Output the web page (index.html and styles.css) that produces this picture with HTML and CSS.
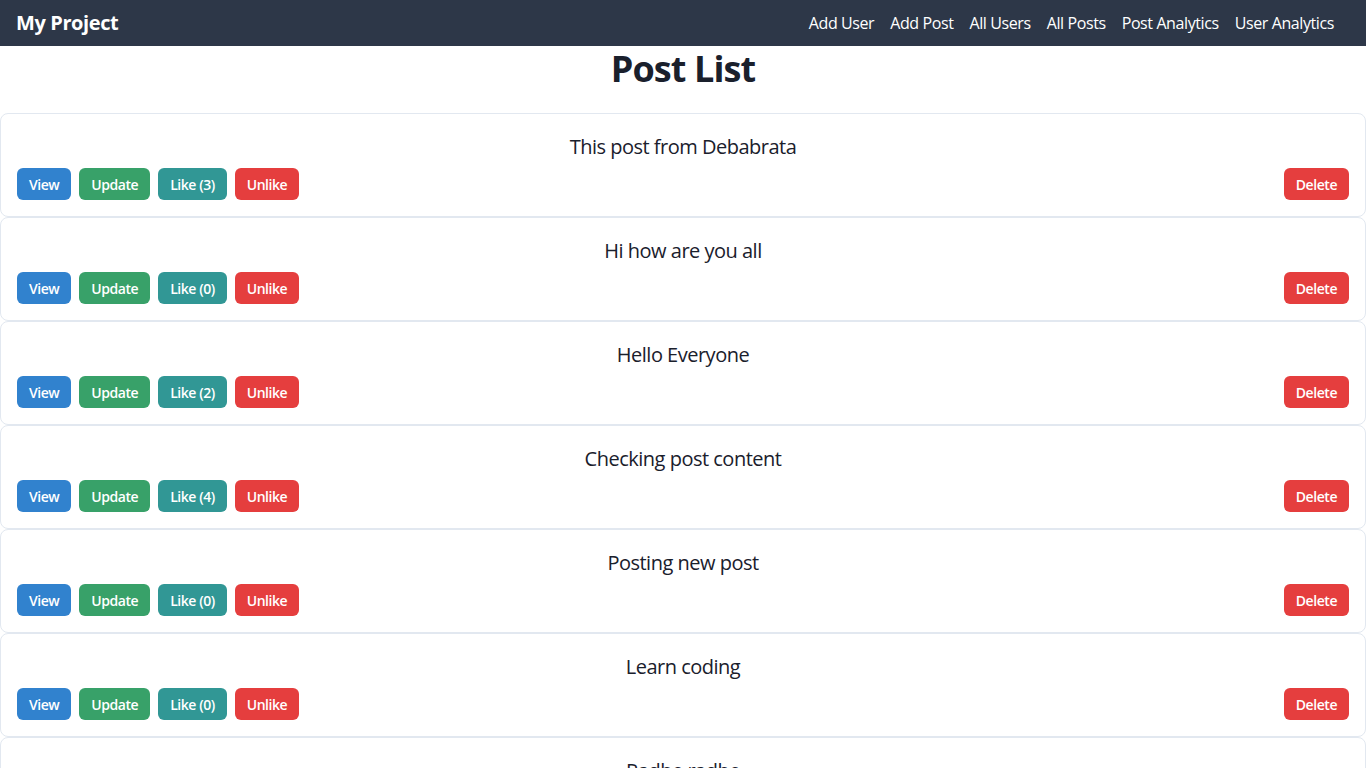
FILE: index.html
```html
<!DOCTYPE html>
<html lang="en">
<head>
<meta charset="utf-8">
<title>My Project</title>
<link rel="stylesheet" href="styles.css">
</head>
<body>
<nav class="navbar">
  <div class="brand">My Project</div>
  <div class="nav-links">
    <a class="nav-link" href="#">Add User</a>
    <a class="nav-link" href="#">Add Post</a>
    <a class="nav-link" href="#">All Users</a>
    <a class="nav-link" href="#">All Posts</a>
    <a class="nav-link" href="#">Post Analytics</a>
    <a class="nav-link" href="#">User Analytics</a>
  </div>
</nav>
<main class="content">
  <h1 class="page-title">Post List</h1>
  <div class="post-list">
    <div class="post-card">
      <p class="post-text">This post from Debabrata</p>
      <div class="post-actions">
        <div class="btn-group">
          <button class="btn btn-blue">View</button>
          <button class="btn btn-green">Update</button>
          <button class="btn btn-teal">Like (3)</button>
          <button class="btn btn-red">Unlike</button>
        </div>
        <button class="btn btn-red">Delete</button>
      </div>
    </div>
    <div class="post-card">
      <p class="post-text">Hi how are you all</p>
      <div class="post-actions">
        <div class="btn-group">
          <button class="btn btn-blue">View</button>
          <button class="btn btn-green">Update</button>
          <button class="btn btn-teal">Like (0)</button>
          <button class="btn btn-red">Unlike</button>
        </div>
        <button class="btn btn-red">Delete</button>
      </div>
    </div>
    <div class="post-card">
      <p class="post-text">Hello Everyone</p>
      <div class="post-actions">
        <div class="btn-group">
          <button class="btn btn-blue">View</button>
          <button class="btn btn-green">Update</button>
          <button class="btn btn-teal">Like (2)</button>
          <button class="btn btn-red">Unlike</button>
        </div>
        <button class="btn btn-red">Delete</button>
      </div>
    </div>
    <div class="post-card">
      <p class="post-text">Checking post content</p>
      <div class="post-actions">
        <div class="btn-group">
          <button class="btn btn-blue">View</button>
          <button class="btn btn-green">Update</button>
          <button class="btn btn-teal">Like (4)</button>
          <button class="btn btn-red">Unlike</button>
        </div>
        <button class="btn btn-red">Delete</button>
      </div>
    </div>
    <div class="post-card">
      <p class="post-text">Posting new post</p>
      <div class="post-actions">
        <div class="btn-group">
          <button class="btn btn-blue">View</button>
          <button class="btn btn-green">Update</button>
          <button class="btn btn-teal">Like (0)</button>
          <button class="btn btn-red">Unlike</button>
        </div>
        <button class="btn btn-red">Delete</button>
      </div>
    </div>
    <div class="post-card">
      <p class="post-text">Learn coding</p>
      <div class="post-actions">
        <div class="btn-group">
          <button class="btn btn-blue">View</button>
          <button class="btn btn-green">Update</button>
          <button class="btn btn-teal">Like (0)</button>
          <button class="btn btn-red">Unlike</button>
        </div>
        <button class="btn btn-red">Delete</button>
      </div>
    </div>
    <div class="post-card">
      <p class="post-text">Radhe radhe</p>
      <div class="post-actions">
        <div class="btn-group">
          <button class="btn btn-blue">View</button>
          <button class="btn btn-green">Update</button>
          <button class="btn btn-teal">Like (1)</button>
          <button class="btn btn-red">Unlike</button>
        </div>
        <button class="btn btn-red">Delete</button>
      </div>
    </div>
  </div>
</main>
</body>
</html>
```
FILE: styles.css
```css
html {
  scrollbar-width: none;
}
html::-webkit-scrollbar {
  display: none;
}
* {
  box-sizing: border-box;
}
body {
  margin: 0;
  font-family: "Open Sans", "Noto Sans", "Liberation Sans", sans-serif;
  color: #1a202c;
  background: #ffffff;
  line-height: 1.5;
}
.navbar {
  height: 46px;
  background: #2d3748;
  display: flex;
  align-items: center;
  justify-content: space-between;
  padding: 0 32px 0 16px;
}
.brand {
  color: #ffffff;
  font-size: 20px;
  font-weight: 700;
  letter-spacing: -0.4px;
}
.nav-links {
  display: flex;
  gap: 16px;
}
.nav-link {
  color: #ffffff;
  text-decoration: none;
  font-size: 16px;
  letter-spacing: -0.4px;
}
.content {
  display: flex;
  flex-direction: column;
}
.page-title {
  margin: 0 0 23px;
  padding-top: 1px;
  text-align: center;
  font-size: 36px;
  line-height: 1.2;
  font-weight: 700;
  letter-spacing: -0.9px;
}
.post-list {
  display: flex;
  flex-direction: column;
}
.post-card {
  border: 1px solid #e2e8f0;
  border-radius: 8px;
  padding: 16px;
  display: flex;
  flex-direction: column;
  gap: 6px;
}
.post-text {
  margin: 2px 0 0;
  text-align: center;
  font-size: 20px;
  line-height: 30px;
  letter-spacing: -0.5px;
}
.post-actions {
  display: flex;
  justify-content: space-between;
  align-items: center;
}
.btn-group {
  display: flex;
  gap: 8px;
}
.btn {
  height: 32px;
  padding: 0 12px;
  border: none;
  border-radius: 6px;
  color: #ffffff;
  font-family: inherit;
  font-size: 14px;
  font-weight: 600;
  letter-spacing: -0.45px;
  cursor: pointer;
}
.btn-blue {
  background: #3182ce;
}
.btn-green {
  background: #38a169;
}
.btn-teal {
  background: #319795;
}
.btn-red {
  background: #e53e3e;
}
```
